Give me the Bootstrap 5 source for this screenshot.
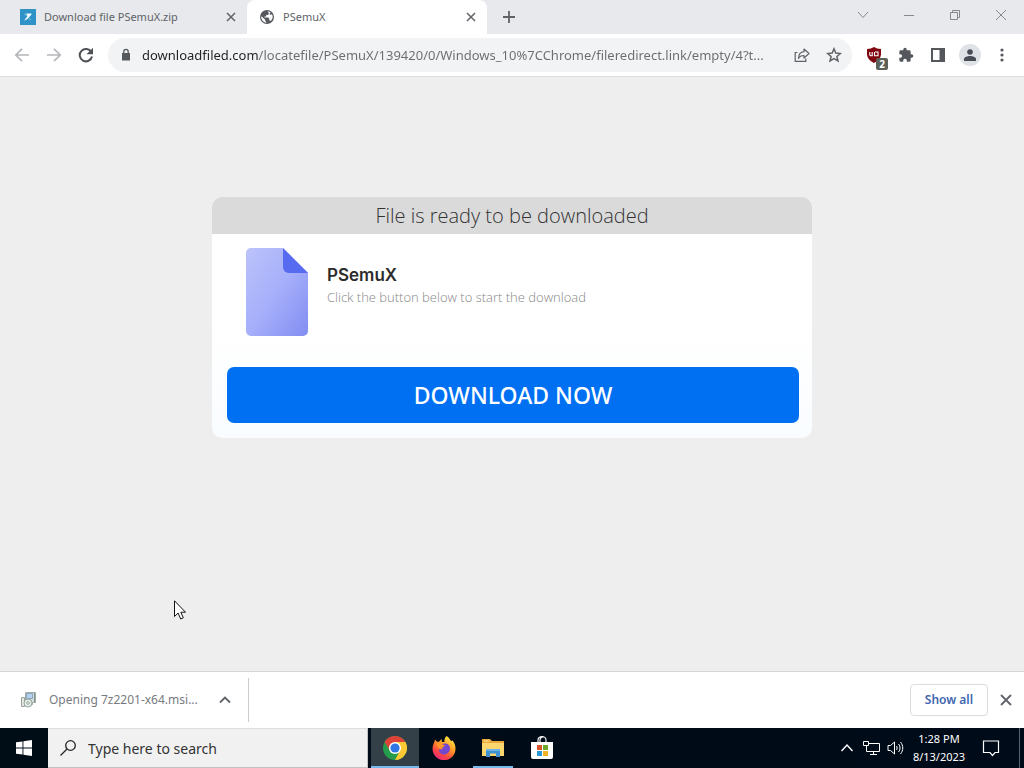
<!DOCTYPE html>
<html lang="en">
<head>
<meta charset="utf-8">
<meta name="viewport" content="width=device-width, initial-scale=1">
<title>PSemuX</title>
<link href="https://cdn.jsdelivr.net/npm/bootstrap@5.3.0/dist/css/bootstrap.min.css" rel="stylesheet">
<style>
  body { font-family: "Noto Sans", "Open Sans", sans-serif; font-size: 13px; background: #eee; }
  svg { display: block; flex: none; }
  .plain { border: 0; background: none; padding: 0; display: flex; align-items: center; justify-content: center; flex: none; color: inherit; }

  .tabstrip { background: #e7e9ec; height: 34px; color: #5f6368; }
  .tab { font-size: 11px; padding: 0 10px 0 20px; gap: 8px; color: #5f6368; }
  .tab-first { flex: 0 1 247px; }
  .tab-open { flex: 0 1 240px; padding-left: 12px; background: #fff; border-radius: 8px 8px 0 0; }
  .tab-close { width: 12px; height: 20px; }
  .newtab { width: 44px; height: 34px; }
  .win { width: 46px; height: 30px; color: #85888c; }

  .toolbar { background: #fff; height: 43px; border-bottom: 1px solid #dcdee0; padding: 0 6px; color: #5f6368; }
  .tool { width: 32px; height: 32px; position: relative; }
  .omnibox { background: #f1f3f4; border-radius: 17px; height: 34px; margin: 0 6px; padding: 0 2px 0 10px; min-width: 0; }
  .url { border: 0; outline: 0; padding: 0; min-width: 0; font-size: 13px; line-height: 20px; margin-left: 8px; text-overflow: ellipsis;
         color: transparent; background: linear-gradient(90deg, #202124 117px, #696d71 117px); -webkit-background-clip: text; background-clip: text; }
  .count { position: absolute; right: 2px; bottom: 1px; width: 12px; height: 12px; border-radius: 2px; background: #5b6058; color: #fff; font-size: 10px; line-height: 12px; font-weight: 700; text-align: center; }
  .avatar { width: 22px; height: 22px; background: #dfe2e7; }

  .page { background: #eee; padding-top: 120px; }
  .dl-card { max-width: 600px; border: 0; border-radius: 10px; overflow: hidden; background: linear-gradient(#fff 55%, #f9fcff); }
  .dl-head { background: #dadada; color: #333; font: 300 20px/37px "Open Sans", sans-serif; }
  .dl-body { padding: 14px 13px 15px 15px; }
  .dl-info { padding-left: 19px; gap: 19px; margin-bottom: 31px; }
  .dl-name { font: 600 17px/24px Inter, sans-serif; color: #2b2b2b; margin: 0; padding-top: 15px; }
  .dl-hint { font: 300 13px/20px "Open Sans", sans-serif; color: #868686; margin: 0; }
  .dl-btn { height: 56px; border: 0; border-radius: 7px; background: #0070f3; color: #fff; font: 500 23px/56px "Noto Sans", sans-serif; padding: 0; }
  .dl-btn:hover { background: #0064da; color: #fff; }
  .pointer { position: absolute; left: 17%; bottom: 51px; }

  .shelf { background: #fff; border-top: 1px solid #d5d6d8; height: 57px; padding-right: 8px; color: #777b7f; }
  .shelf-item { width: 249px; height: 44px; border-right: 1px solid #c9cbce; padding: 0 16px 0 20px; gap: 12px; font-size: 12px; }
  .showall { width: 78px; height: 32px; border: 1px solid #dadce0; border-radius: 4px; background: #fff; color: #3f67b1; font-size: 12px; font-weight: 600; padding: 0; }
  .shelf-x { width: 20px; height: 24px; margin-left: 8px; color: #5f6368; }

  .taskbar { background: linear-gradient(90deg, #000c16, #000b19); height: 40px; color: #fff; }
  .apps { gap: 1px; padding-left: 3px; }
  .task { width: 48px; height: 40px; }
  .task-run { background: linear-gradient(#76b9ed, #76b9ed) center bottom / 40px 2px no-repeat; }
  .task-here { background-color: #344047; background-size: 48px 2px; }
  .task-search { flex: 0 1 320px; background: #f1f1f1; border: 1px solid #c3c3c3; border-left: 0; border-top-color: #ddd; padding-left: 12px; gap: 12px; color: #222; }
  .task-search input { border: 0; outline: 0; background: none; padding: 0; min-width: 0; font-size: 14px; color: #222; }
  .task-search input::placeholder { color: #333; opacity: 1; }
  .tray { width: 24px; height: 40px; }
  .clock { width: 64px; font-size: 11px; line-height: 18px; }
  .notif { width: 40px; height: 40px; }
  .peek { width: 5px; height: 40px; border-left: 1px solid #5a626c; margin-left: 8px; }
</style>
</head>
<body class="vh-100 d-flex flex-column overflow-hidden">

<header>
  <div class="tabstrip d-flex">
    <div class="tab tab-first d-flex align-items-center">
      <svg width="16" height="16" viewBox="0 0 16 16"><path fill="#2f93c7" d="M0 0h16v16H0z"/><path d="M6 4.500h5.500v1L7.500 10l-3.500 1.800L7.500 7z" fill="#f2fafd"/><path d="M4.500 5l2 1.500M9 9.500l1.500 1" stroke="#9fd0e8"/></svg>
      <span class="flex-grow-1 text-truncate">Download file PSemuX.zip</span>
      <button class="plain tab-close" aria-label="Close tab"><svg width="10" height="10" viewBox="0 0 10 10" stroke="currentColor" stroke-width="1.500"><path d="M1 1l8 8M9 1L1 9"/></svg></button>
    </div>
    <div class="tab tab-open d-flex align-items-center">
      <svg width="16" height="16" viewBox="0 0 16 16"><circle cx="8" cy="8" r="7" fill="#55595e"/><path d="M8.500 2.500L10 4.200 9 6H7.200v1.500H5.500v1h3.800l1 1.200v1.800l1.500.2c1.200-1 1.900-2.300 1.900-3.700 0-1-.3-2-.8-2.800l-.9.600h-1.200V4l1-.7C10.900 2.700 9.700 2.400 8.500 2.500z" fill="#fff"/><path d="M2.400 7.200l3.800 3.600v1.300l1.100 1v.6C4.400 13.400 2.200 10.800 2.200 8z" fill="#fff"/></svg>
      <span class="flex-grow-1 text-truncate">PSemuX</span>
      <button class="plain tab-close" aria-label="Close tab"><svg width="10" height="10" viewBox="0 0 10 10" stroke="currentColor" stroke-width="1.500"><path d="M1 1l8 8M9 1L1 9"/></svg></button>
    </div>
    <button class="plain newtab" aria-label="New tab"><svg width="12" height="12" viewBox="0 0 12 12" stroke="currentColor" stroke-width="1.800"><path d="M6 0v12M0 6h12"/></svg></button>
    <div class="d-flex ms-auto">
      <button class="plain win" aria-label="Search tabs"><svg width="12" height="12" viewBox="0 0 12 12" fill="none" stroke="currentColor"><path d="M1 3l5 5.500L11 3"/></svg></button>
      <button class="plain win" aria-label="Minimize"><svg width="12" height="12" viewBox="0 0 12 12" stroke="currentColor"><path d="M1 6.500h10"/></svg></button>
      <button class="plain win" aria-label="Restore"><svg width="12" height="12" viewBox="0 0 12 12" fill="none" stroke="currentColor"><path d="M1.500 3.500h7v7h-7zM3.500 3.500v-2h7v7h-2"/></svg></button>
      <button class="plain win" aria-label="Close"><svg width="12" height="12" viewBox="0 0 12 12" stroke="currentColor"><path d="M1 1l10 10M11 1L1 11"/></svg></button>
    </div>
  </div>

  <div class="toolbar d-flex align-items-center">
    <button class="plain tool" aria-label="Back"><svg width="16" height="16" viewBox="0 0 16 16" fill="none" stroke="#b4b7bb" stroke-width="1.700"><path d="M15 8H2M8 1.800L1.800 8 8 14.200"/></svg></button>
    <button class="plain tool" aria-label="Forward"><svg width="16" height="16" viewBox="0 0 16 16" fill="none" stroke="#b4b7bb" stroke-width="1.700"><path d="M1 8h13M8 1.800L14.200 8 8 14.200"/></svg></button>
    <button class="plain tool" aria-label="Reload"><svg width="16" height="16" viewBox="0 0 16 16"><path d="M13.300 5A6.200 6.200 0 1 0 14 9.500" fill="none" stroke="#4d5156" stroke-width="2"/><path d="M15 .8v6.500H8.500z" fill="#4d5156"/></svg></button>
    <div class="omnibox d-flex align-items-center flex-grow-1">
      <svg width="16" height="16" viewBox="0 0 16 16"><path d="M4 6h8v7.500H4z" fill="#54595d"/><path d="M5.800 6.500V4.500a2.200 2.200 0 0 1 4.400 0v2" fill="none" stroke="#54595d" stroke-width="1.300"/></svg>
      <input class="url flex-grow-1" aria-label="Address" value="downloadfiled.com/locatefile/PSemuX/139420/0/Windows_10%7CChrome/fileredirect.link/empty/4?t...">
      <button class="plain tool" aria-label="Share"><svg width="16" height="16" viewBox="0 0 16 16" fill="none" stroke="currentColor" stroke-width="1.200"><path d="M3.500 5.500H1.200V14.400h10.600V11.500"/><path d="M10 2l5 4.500L10 11V8.500c-2.500 0-4.500.7-5.500 3C4.500 7.500 6.500 5 10 4.600z" stroke-linejoin="round"/></svg></button>
      <button class="plain tool" aria-label="Bookmark"><svg width="16" height="16" viewBox="0 0 16 16" fill="none" stroke="currentColor" stroke-width="1.500"><path d="M8 1.800l1.800 4.300 4.600.4-3.500 3 1.100 4.500L8 11.600 4 14l1.100-4.500-3.500-3 4.600-.4z"/></svg></button>
    </div>
    <button class="plain tool" aria-label="uBlock Origin">
      <svg width="16" height="16" viewBox="0 0 16 16"><path d="M8 0c2 1.300 4 1.900 7 2v5c0 4.500-3.500 7-7 9-3.500-2-7-4.500-7-9V2c3-.1 5-.7 7-2z" fill="#800610"/><path d="M3.800 5v2.700a1 1 0 0 0 1 1h1.400V5M9 5h3v3.700H8.500V5" fill="none" stroke="#fff" stroke-width="1.100"/></svg>
      <span class="count">2</span>
    </button>
    <button class="plain tool" aria-label="Extensions"><svg width="16" height="16" viewBox="0 0 24 24"><path fill="#54585d" d="M20.500 11H19V7a2 2 0 0 0-2-2h-4V3.500a2.500 2.500 0 0 0-5 0V5H4a2 2 0 0 0-2 2v3.800h1.500a2.700 2.700 0 0 1 0 5.400H2V20a2 2 0 0 0 2 2h3.800v-1.500a2.700 2.700 0 0 1 5.400 0V22H17a2 2 0 0 0 2-2v-4h1.500a2.500 2.500 0 0 0 0-5z"/></svg></button>
    <button class="plain tool" aria-label="Side panel"><svg width="14" height="14" viewBox="0 0 14 14"><path d="M1 1h12v12H1z" fill="#fff" stroke="#54585d" stroke-width="2"/><path d="M8.500 1H13v12H8.500z" fill="#54585d"/></svg></button>
    <button class="plain tool" aria-label="Profile"><span class="avatar rounded-circle d-flex align-items-center justify-content-center"><svg width="12" height="12" viewBox="0 0 12 12" fill="#474c55"><circle cx="6" cy="3" r="2.800"/><path d="M0 12v-2c0-2 3.500-3 6-3s6 1 6 3v2z"/></svg></span></button>
    <button class="plain tool" aria-label="Menu"><svg width="4" height="14" viewBox="0 0 4 14" fill="#54585d"><circle cx="2" cy="2" r="1.600"/><circle cx="2" cy="7" r="1.600"/><circle cx="2" cy="12" r="1.600"/></svg></button>
  </div>
</header>

<main class="page flex-grow-1 position-relative">
  <section class="card dl-card mx-auto">
    <h1 class="dl-head text-center m-0">File is ready to be downloaded</h1>
    <div class="dl-body">
      <div class="dl-info d-flex">
        <svg width="62" height="88" viewBox="0 0 62 88">
          <defs><linearGradient id="sheet" x1="0" y1="0" x2="1" y2="1"><stop offset="0" stop-color="#bcc3fb"/><stop offset=".5" stop-color="#a6affa"/><stop offset="1" stop-color="#828df2"/></linearGradient></defs>
          <path d="M5 0h32l25 25v58a5 5 0 0 1-5 5H5a5 5 0 0 1-5-5V5a5 5 0 0 1 5-5z" fill="url(#sheet)"/>
          <path d="M37 0l25 25H43a6 6 0 0 1-6-6z" fill="#566bf0"/>
        </svg>
        <div>
          <h2 class="dl-name">PSemuX</h2>
          <p class="dl-hint">Click the button below to start the download</p>
        </div>
      </div>
      <button class="btn dl-btn w-100 d-block">DOWNLOAD NOW</button>
    </div>
  </section>
  <svg class="pointer" width="12" height="20" viewBox="0 0 12 20"><path d="M.5.800v15.700l3.600-3.500 2.600 6 2.600-1.200-2.500-5.600h4.700z" fill="#fff" stroke="#111" stroke-linejoin="round"/></svg>
</main>

<footer>
  <div class="shelf d-flex align-items-center">
    <div class="shelf-item d-flex align-items-center">
      <svg width="17" height="18" viewBox="0 0 17 18"><path d="M5.500 1.500h10v10h-3v2h-7z" fill="#d5dedb" stroke="#a1aba7"/><path d="M6.500 2.500h6v5h-6z" fill="#b4d0ee" stroke="#8ba7c1"/><path d="M14.500 2v9" stroke="#7f9188"/><path d="M1.500 6.500h3v9h-3z" fill="#e4e8e3" stroke="#98a19b"/><circle cx="8" cy="12" r="4" fill="#e7ece9" stroke="#96a69e"/><circle cx="8" cy="12" r="1.300" fill="#fff" stroke="#96a69e"/></svg>
      <span class="flex-grow-1 text-truncate">Opening 7z2201-x64.msi...</span>
      <button class="plain" aria-label="Download options"><svg width="14" height="12" viewBox="0 0 14 12" fill="none" stroke="#5f6368" stroke-width="1.800"><path d="M2 8.500l5-5 5 5"/></svg></button>
    </div>
    <button class="showall ms-auto">Show all</button>
    <button class="plain shelf-x" aria-label="Close downloads bar"><svg width="12" height="12" viewBox="0 0 12 12" stroke="currentColor" stroke-width="1.800"><path d="M1 1l10 10M11 1L1 11"/></svg></button>
  </div>

  <div class="taskbar d-flex align-items-center">
    <button class="plain task" aria-label="Start"><svg width="16" height="16" viewBox="0 0 16 16" fill="#fff"><path d="M0 2.300l6.500-.9v6.200H0zM7.400 1.200L16 0v7.600H7.400zM0 8.400h6.500v6.200L0 13.700zM7.400 8.400H16V16l-8.600-1.200z"/></svg></button>
    <label class="task-search d-flex align-items-center align-self-stretch">
      <svg width="16" height="16" viewBox="0 0 16 16" fill="none" stroke="#222" stroke-width="1.300"><circle cx="10.500" cy="5.500" r="4.800"/><path d="M7 9L.5 15.500"/></svg>
      <input class="flex-grow-1" type="text" placeholder="Type here to search" aria-label="Type here to search">
    </label>
    <div class="apps d-flex">
      <button class="plain task task-run task-here" aria-label="Chrome"><svg width="24" height="24" viewBox="0 0 24 24"><circle cx="12" cy="12" r="12" fill="#259b4c"/><path d="M1.600 6A12 12 0 0 1 22.400 6L12 12z" fill="#df4338"/><path d="M1.600 6L7.200 15 12 7z" fill="#df4338"/><path d="M22.400 6A12 12 0 0 1 12 24l5-9.500L12 6z" fill="#fcc934"/><circle cx="12" cy="12" r="6.100" fill="#fff"/><circle cx="12" cy="12" r="4.600" fill="#2f76e4"/></svg></button>
      <button class="plain task" aria-label="Firefox"><svg width="24" height="24" viewBox="0 0 24 24"><defs><linearGradient id="fox" x1=".8" y1="0" x2=".2" y2="1"><stop offset="0" stop-color="#fff04a"/><stop offset=".4" stop-color="#ff9b25"/><stop offset=".75" stop-color="#fb4048"/><stop offset="1" stop-color="#e42787"/></linearGradient></defs><path d="M14.500 0c3 1.500 3.500 4 4.500 5l1.500-.5c2 2 3 5 3 8A11.500 11.500 0 0 1 .5 13c0-3.500 1-5 2-7.500l.5-2 2 2.300h2L9.500 3l.5 3h2.500c-.5-2 .5-4.500 2-6z" fill="url(#fox)"/><path d="M11 8c4-1.500 7 1 7 4.500S15 18.500 12 18.500 6.500 16 7 13c1.500 1 3 .5 4-.5-1.500-.5-2-1.500-2-2.500z" fill="#7347cf"/><path d="M4 8c2-1.500 4-1.500 5.500-.5 1 1 1.500 1.500 3.500 1.500-.5 2-2.500 1.500-3 3-1 1.500-3 1-3.500 0z" fill="#ff9528"/></svg></button>
      <button class="plain task task-run" aria-label="File Explorer"><svg width="24" height="20" viewBox="0 0 24 20"><path d="M1 1h8l2 2h12v15H1z" fill="#e9a93a"/><path d="M1 5h22v13H1z" fill="#fbd56d"/><path d="M3 3h5" stroke="#fff0b0"/><path d="M5 19v-8h14v8h-4v-3.500H9V19z" fill="#3f92d1"/><path d="M5 11h14v2H5z" fill="#6ab5e5"/></svg></button>
      <button class="plain task" aria-label="Microsoft Store"><svg width="24" height="24" viewBox="0 0 24 24"><path d="M8 7V4a4 3.500 0 0 1 8 0v3M10 7V3.500A3.500 3.500 0 0 1 14 1" fill="none" stroke="#eee" stroke-width="1.200"/><path d="M1 6h22v15a2 2 0 0 1-2 2H3a2 2 0 0 1-2-2z" fill="#fff"/><path d="M7 9h5v5H7z" fill="#d9532c"/><path d="M13 9h5v5h-5z" fill="#6fa92c"/><path d="M7 15h5v5H7z" fill="#2795d6"/><path d="M13 15h5v5h-5z" fill="#eeb121"/></svg></button>
    </div>
    <div class="d-flex align-items-center ms-auto">
      <button class="plain tray" aria-label="Show hidden icons"><svg width="14" height="10" viewBox="0 0 14 10" fill="none" stroke="#fff" stroke-width="1.400"><path d="M1.500 8L7 2l5.500 6"/></svg></button>
      <button class="plain tray" aria-label="Network"><svg width="17" height="16" viewBox="0 0 17 16" fill="none" stroke="#fff"><path d="M6 3.500h10.500v8H3.500V7M10.500 12v3M7 14.500h7M.5 1.500h5v4h-5zM3.500 5.500v2"/></svg></button>
      <button class="plain tray" aria-label="Volume"><svg width="17" height="16" viewBox="0 0 17 16" fill="none" stroke="#fff"><path d="M1 5.500h2.500L7.500 2v12L3.500 10.500H1zM9.500 6c.8 1.200.8 2.800 0 4M11.500 4c2 2.400 2 5.600 0 8M13.500 2c3 3.500 3 8.500 0 12"/></svg></button>
      <div class="clock text-center">1:28 PM<br>8/13/2023</div>
      <button class="plain notif" aria-label="Notifications"><svg width="18" height="18" viewBox="0 0 18 18" fill="none" stroke="#fff" stroke-width="1.200"><path d="M1.500 2h15v11.500H13L10.500 16.500 8 13.500H1.500z"/></svg></button>
      <button class="plain peek" aria-label="Show desktop"></button>
    </div>
  </div>
</footer>

<script src="https://cdn.jsdelivr.net/npm/bootstrap@5.3.0/dist/js/bootstrap.bundle.min.js"></script>
</body>
</html>
